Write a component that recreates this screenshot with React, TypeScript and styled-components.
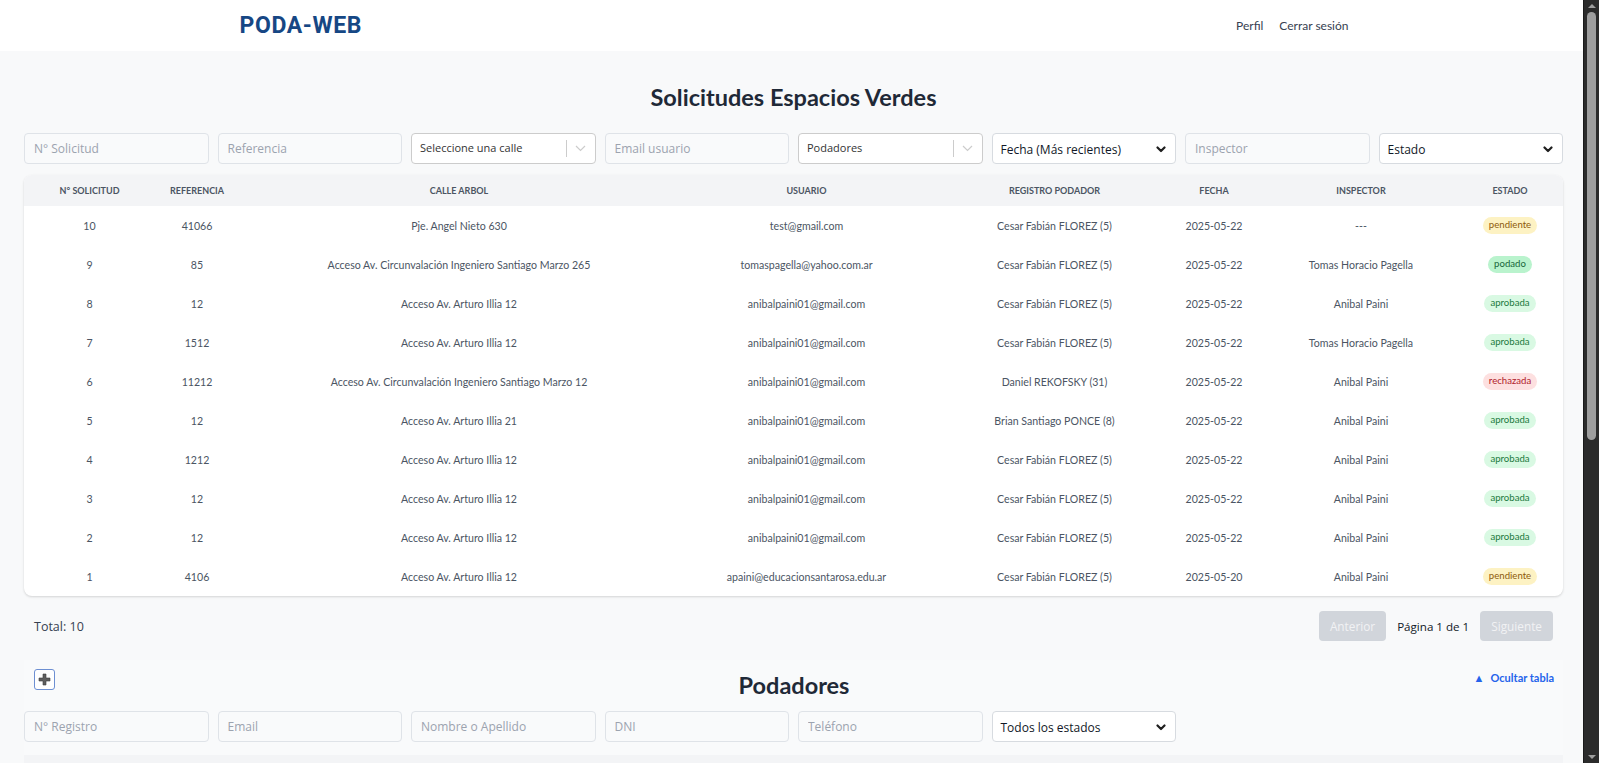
import React from 'react';
import styled, { createGlobalStyle } from 'styled-components';

type Estado = 'pendiente' | 'podado' | 'aprobada' | 'rechazada';

interface Solicitud {
  id: number;
  referencia: string;
  calle: string;
  usuario: string;
  podador: string;
  fecha: string;
  inspector: string;
  estado: Estado;
}

const solicitudes: Solicitud[] = [
  { id: 10, referencia: '41066', calle: 'Pje. Angel Nieto 630', usuario: 'test@gmail.com', podador: 'Cesar Fabián FLOREZ (5)', fecha: '2025-05-22', inspector: '---', estado: 'pendiente' },
  { id: 9, referencia: '85', calle: 'Acceso Av. Circunvalación Ingeniero Santiago Marzo 265', usuario: 'tomaspagella@yahoo.com.ar', podador: 'Cesar Fabián FLOREZ (5)', fecha: '2025-05-22', inspector: 'Tomas Horacio Pagella', estado: 'podado' },
  { id: 8, referencia: '12', calle: 'Acceso Av. Arturo Illia 12', usuario: 'anibalpaini01@gmail.com', podador: 'Cesar Fabián FLOREZ (5)', fecha: '2025-05-22', inspector: 'Anibal Paini', estado: 'aprobada' },
  { id: 7, referencia: '1512', calle: 'Acceso Av. Arturo Illia 12', usuario: 'anibalpaini01@gmail.com', podador: 'Cesar Fabián FLOREZ (5)', fecha: '2025-05-22', inspector: 'Tomas Horacio Pagella', estado: 'aprobada' },
  { id: 6, referencia: '11212', calle: 'Acceso Av. Circunvalación Ingeniero Santiago Marzo 12', usuario: 'anibalpaini01@gmail.com', podador: 'Daniel REKOFSKY (31)', fecha: '2025-05-22', inspector: 'Anibal Paini', estado: 'rechazada' },
  { id: 5, referencia: '12', calle: 'Acceso Av. Arturo Illia 21', usuario: 'anibalpaini01@gmail.com', podador: 'Brian Santiago PONCE (8)', fecha: '2025-05-22', inspector: 'Anibal Paini', estado: 'aprobada' },
  { id: 4, referencia: '1212', calle: 'Acceso Av. Arturo Illia 12', usuario: 'anibalpaini01@gmail.com', podador: 'Cesar Fabián FLOREZ (5)', fecha: '2025-05-22', inspector: 'Anibal Paini', estado: 'aprobada' },
  { id: 3, referencia: '12', calle: 'Acceso Av. Arturo Illia 12', usuario: 'anibalpaini01@gmail.com', podador: 'Cesar Fabián FLOREZ (5)', fecha: '2025-05-22', inspector: 'Anibal Paini', estado: 'aprobada' },
  { id: 2, referencia: '12', calle: 'Acceso Av. Arturo Illia 12', usuario: 'anibalpaini01@gmail.com', podador: 'Cesar Fabián FLOREZ (5)', fecha: '2025-05-22', inspector: 'Anibal Paini', estado: 'aprobada' },
  { id: 1, referencia: '4106', calle: 'Acceso Av. Arturo Illia 12', usuario: 'apaini@educacionsantarosa.edu.ar', podador: 'Cesar Fabián FLOREZ (5)', fecha: '2025-05-20', inspector: 'Anibal Paini', estado: 'pendiente' },
];

// anchos de columna medidos sobre la captura
const solicitudCols = [131, 84, 440, 255, 241, 78, 216, 94];
const solicitudHeaders = ['N° Solicitud', 'Referencia', 'Calle Arbol', 'Usuario', 'Registro Podador', 'Fecha', 'Inspector', 'Estado'];
const podadorHeaders = ['N° Registro', 'Nombre y Apellido', 'Email', 'DNI', 'Domicilio', 'Teléfono', 'Estado'];

const badgeColors: Record<Estado, { bg: string; fg: string }> = {
  pendiente: { bg: '#fdf2c3', fg: '#8d5a0c' },
  podado: { bg: '#b9f3cd', fg: '#17663a' },
  aprobada: { bg: '#d9f9e3', fg: '#1c7a40' },
  rechazada: { bg: '#fde0e0', fg: '#b0202a' },
};

const GlobalStyle = createGlobalStyle`
  html, body {
    margin: 0;
    padding: 0;
    overflow: hidden;
  }
  body {
    background: #f8f9fa;
    font-family: Lato, "Open Sans", sans-serif;
    color: #374151;
    padding-right: 16px;
  }
  * {
    box-sizing: border-box;
  }
`;

// réplica de la barra de desplazamiento de la captura
const ScrollTrack = styled.div`
  position: fixed;
  top: 0;
  right: 0;
  width: 16px;
  height: 100vh;
  background: #2b2b2b;
  border-left: 1px solid #1a1a1a;
  display: flex;
  flex-direction: column;
  align-items: center;
  justify-content: space-between;
  padding: 4px 0;
`;

const ScrollThumb = styled.div`
  position: absolute;
  top: 12px;
  left: 3px;
  width: 9px;
  height: 428px;
  border-radius: 5px;
  background: #9e9e9e;
`;

const ScrollArrow = styled.span<{ $down?: boolean }>`
  width: 0;
  height: 0;
  border-left: 4px solid transparent;
  border-right: 4px solid transparent;
  ${(p) => (p.$down ? 'border-top: 4px solid #9e9e9e;' : 'border-bottom: 4px solid #9e9e9e;')}
`;

const TopBar = styled.header`
  background: #ffffff;
  height: 51px;
`;

const TopInner = styled.div`
  max-width: 1152px;
  height: 100%;
  margin: 0 auto;
  padding: 0 24px;
  display: flex;
  align-items: center;
  justify-content: space-between;
`;

const Logo = styled.div`
  font-family: Roboto, sans-serif;
  font-weight: 700;
  font-size: 23px;
  color: #164784;
  letter-spacing: 0.6px;
`;

const Nav = styled.nav`
  display: flex;
  gap: 16px;
  margin-right: -5px;
`;

const NavLink = styled.a`
  font-size: 12px;
  color: #374151;
  text-decoration: none;
  cursor: pointer;
`;

const Main = styled.main`
  padding: 30px 20px 40px 24px;
`;

const PageTitle = styled.h1`
  margin: 0 0 20px;
  text-align: center;
  font-size: 23.5px;
  line-height: 32px;
  font-weight: 700;
  color: #1f2937;
`;

const FilterGrid = styled.div`
  display: grid;
  grid-template-columns: repeat(8, 1fr);
  gap: 9px;
`;

const TextInput = styled.input`
  height: 31px;
  width: 100%;
  border: 1px solid #dfe3e8;
  border-radius: 4px;
  background: #f9fafb;
  padding: 0 9px;
  font-family: "Open Sans", sans-serif;
  font-size: 12px;
  color: #374151;
  outline: none;
  &::placeholder {
    color: #9ca3af;
  }
`;

const ComboBox = styled.div`
  height: 31px;
  border: 1px solid #cccccc;
  border-radius: 4px;
  background: #ffffff;
  display: flex;
  align-items: center;
  padding-left: 8px;
  font-family: "Open Sans", sans-serif;
  font-size: 11px;
  color: #333333;
`;

const ComboText = styled.span`
  flex: 1;
  margin-top: -3px;
`;

const ComboSeparator = styled.span`
  width: 1px;
  height: 17px;
  background: #cccccc;
`;

const ComboArrow = styled.span`
  width: 28px;
  display: flex;
  justify-content: center;
  color: #cccccc;
`;

const SelectBox = styled.div`
  height: 31px;
  border: 1px solid #d7dbe0;
  border-radius: 4px;
  background: #ffffff;
  display: flex;
  align-items: center;
  justify-content: space-between;
  padding: 2px 9px 0 8px;
  font-family: "Open Sans", sans-serif;
  font-size: 12px;
  color: #111827;
`;

const Card = styled.div`
  margin-top: 11px;
  background: #ffffff;
  border-radius: 8px;
  box-shadow: 0 1px 3px rgba(0, 0, 0, 0.1), 0 1px 2px rgba(0, 0, 0, 0.06);
  overflow: hidden;
`;

const Table = styled.table`
  width: 100%;
  border-collapse: collapse;
  table-layout: fixed;
`;

const HeadCell = styled.th`
  background: #f3f4f6;
  height: 31px;
  padding: 0 8px;
  font-size: 9px;
  font-weight: 700;
  text-transform: uppercase;
  color: #4b5563;
  text-align: center;
  white-space: nowrap;
  &:last-child {
    padding-right: 20px;
  }
`;

const LowHeadCell = styled(HeadCell)`
  height: 36px;
  padding-top: 14px;
`;

const Cell = styled.td`
  height: 39px;
  padding: 0 8px;
  font-size: 10.6px;
  color: #4b5563;
  text-align: center;
  white-space: nowrap;
  &:last-child {
    padding-right: 20px;
  }
`;

const Badge = styled.span<{ $estado: Estado }>`
  display: inline-block;
  padding: 2px 6px 3px;
  border-radius: 9999px;
  font-size: 9.6px;
  line-height: 12px;
  background: ${(p) => badgeColors[p.$estado].bg};
  color: ${(p) => badgeColors[p.$estado].fg};
`;

const Footer = styled.div`
  display: flex;
  align-items: center;
  justify-content: space-between;
  padding: 15px 10px 0 10px;
`;

const Total = styled.span`
  font-family: "Open Sans", sans-serif;
  font-size: 12.5px;
  color: #374151;
`;

const Pager = styled.div`
  display: flex;
  align-items: center;
  gap: 11px;
`;

const PagerButton = styled.button`
  height: 30px;
  padding: 0 11px;
  border: none;
  border-radius: 4px;
  background: #d1d5db;
  color: #f1f2f4;
  font-family: "Open Sans", sans-serif;
  font-size: 11.8px;
  cursor: not-allowed;
`;

const PagerLabel = styled.span`
  font-family: "Open Sans", sans-serif;
  font-size: 11.6px;
  color: #111827;
`;

const Panel = styled.section`
  margin-top: 19px;
  background: #f9fafb;
  padding-top: 6px;
`;

const PanelHead = styled.div`
  display: grid;
  grid-template-columns: 1fr auto 1fr;
  align-items: start;
  padding: 0 9px 0 10px;
`;

const AddButton = styled.button`
  margin-top: 3px;
  width: 21px;
  height: 21px;
  padding: 0;
  border: 1px solid #6d8fd2;
  border-radius: 3px;
  background: #ffffff;
  display: flex;
  align-items: center;
  justify-content: center;
  justify-self: start;
  cursor: pointer;
`;

const SectionTitle = styled.h2`
  margin: 3px 0 0;
  font-size: 23.5px;
  line-height: 32px;
  font-weight: 700;
  color: #1f2937;
`;

const ToggleLink = styled.a`
  justify-self: end;
  margin-top: 4px;
  display: flex;
  align-items: center;
  gap: 6px;
  font-size: 11px;
  line-height: 15px;
  font-weight: 700;
  color: #2563eb;
  cursor: pointer;
`;

const PanelFilters = styled(FilterGrid)`
  margin-top: 10px;
`;

const PanelTable = styled.div`
  margin-top: 13px;
  background: #ffffff;
`;

const ChevronDown: React.FC = () => (
  <svg width="10" height="7" viewBox="0 0 10 7">
    <polyline points="1.5,1.5 5,5 8.5,1.5" fill="none" stroke="#1f1f1f" strokeWidth="2.2" strokeLinecap="round" strokeLinejoin="round" />
  </svg>
);

const ThinChevron: React.FC = () => (
  <svg width="11" height="7" viewBox="0 0 11 7">
    <polyline points="1,1 5.5,5.5 10,1" fill="none" stroke="currentColor" strokeWidth="1.2" />
  </svg>
);

const PlusIcon: React.FC = () => (
  <svg width="13" height="13" viewBox="0 0 13 13">
    <path d="M5 1h3v4h4v3H8v4H5V8H1V5h4z" fill="#5f5f5f" stroke="#3d3d3d" strokeWidth="0.6" />
  </svg>
);

const Combo: React.FC<{ label: string }> = ({ label }) => (
  <ComboBox>
    <ComboText>{label}</ComboText>
    <ComboSeparator />
    <ComboArrow>
      <ThinChevron />
    </ComboArrow>
  </ComboBox>
);

const Select: React.FC<{ label: string }> = ({ label }) => (
  <SelectBox>
    <span>{label}</span>
    <ChevronDown />
  </SelectBox>
);

const App: React.FC = () => {
  return (
    <>
      <GlobalStyle />
      <TopBar>
        <TopInner>
          <Logo>PODA-WEB</Logo>
          <Nav>
            <NavLink>Perfil</NavLink>
            <NavLink>Cerrar sesión</NavLink>
          </Nav>
        </TopInner>
      </TopBar>

      <Main>
        <PageTitle>Solicitudes Espacios Verdes</PageTitle>

        <FilterGrid>
          <TextInput placeholder="N° Solicitud" />
          <TextInput placeholder="Referencia" />
          <Combo label="Seleccione una calle" />
          <TextInput placeholder="Email usuario" />
          <Combo label="Podadores" />
          <Select label="Fecha (Más recientes)" />
          <TextInput placeholder="Inspector" />
          <Select label="Estado" />
        </FilterGrid>

        <Card>
          <Table>
            <colgroup>
              {solicitudCols.map((w, i) => (
                <col key={i} style={{ width: w }} />
              ))}
            </colgroup>
            <thead>
              <tr>
                {solicitudHeaders.map((h) => (
                  <HeadCell key={h}>{h}</HeadCell>
                ))}
              </tr>
            </thead>
            <tbody>
              {solicitudes.map((s) => (
                <tr key={s.id}>
                  <Cell>{s.id}</Cell>
                  <Cell>{s.referencia}</Cell>
                  <Cell>{s.calle}</Cell>
                  <Cell>{s.usuario}</Cell>
                  <Cell>{s.podador}</Cell>
                  <Cell>{s.fecha}</Cell>
                  <Cell>{s.inspector}</Cell>
                  <Cell>
                    <Badge $estado={s.estado}>{s.estado}</Badge>
                  </Cell>
                </tr>
              ))}
            </tbody>
          </Table>
        </Card>

        <Footer>
          <Total>Total: 10</Total>
          <Pager>
            <PagerButton disabled>Anterior</PagerButton>
            <PagerLabel>Página 1 de 1</PagerLabel>
            <PagerButton disabled>Siguiente</PagerButton>
          </Pager>
        </Footer>

        <Panel>
          <PanelHead>
            <AddButton aria-label="Agregar podador">
              <PlusIcon />
            </AddButton>
            <SectionTitle>Podadores</SectionTitle>
            <ToggleLink>
              <span>▲</span>
              <span>Ocultar tabla</span>
            </ToggleLink>
          </PanelHead>

          <PanelFilters>
            <TextInput placeholder="N° Registro" />
            <TextInput placeholder="Email" />
            <TextInput placeholder="Nombre o Apellido" />
            <TextInput placeholder="DNI" />
            <TextInput placeholder="Teléfono" />
            <Select label="Todos los estados" />
          </PanelFilters>

          <PanelTable>
            <Table>
              <thead>
                <tr>
                  {podadorHeaders.map((h) => (
                    <LowHeadCell key={h}>{h}</LowHeadCell>
                  ))}
                </tr>
              </thead>
            </Table>
          </PanelTable>
        </Panel>
      </Main>

      <ScrollTrack aria-hidden>
        <ScrollArrow />
        <ScrollThumb />
        <ScrollArrow $down />
      </ScrollTrack>
    </>
  );
};

export default App;
